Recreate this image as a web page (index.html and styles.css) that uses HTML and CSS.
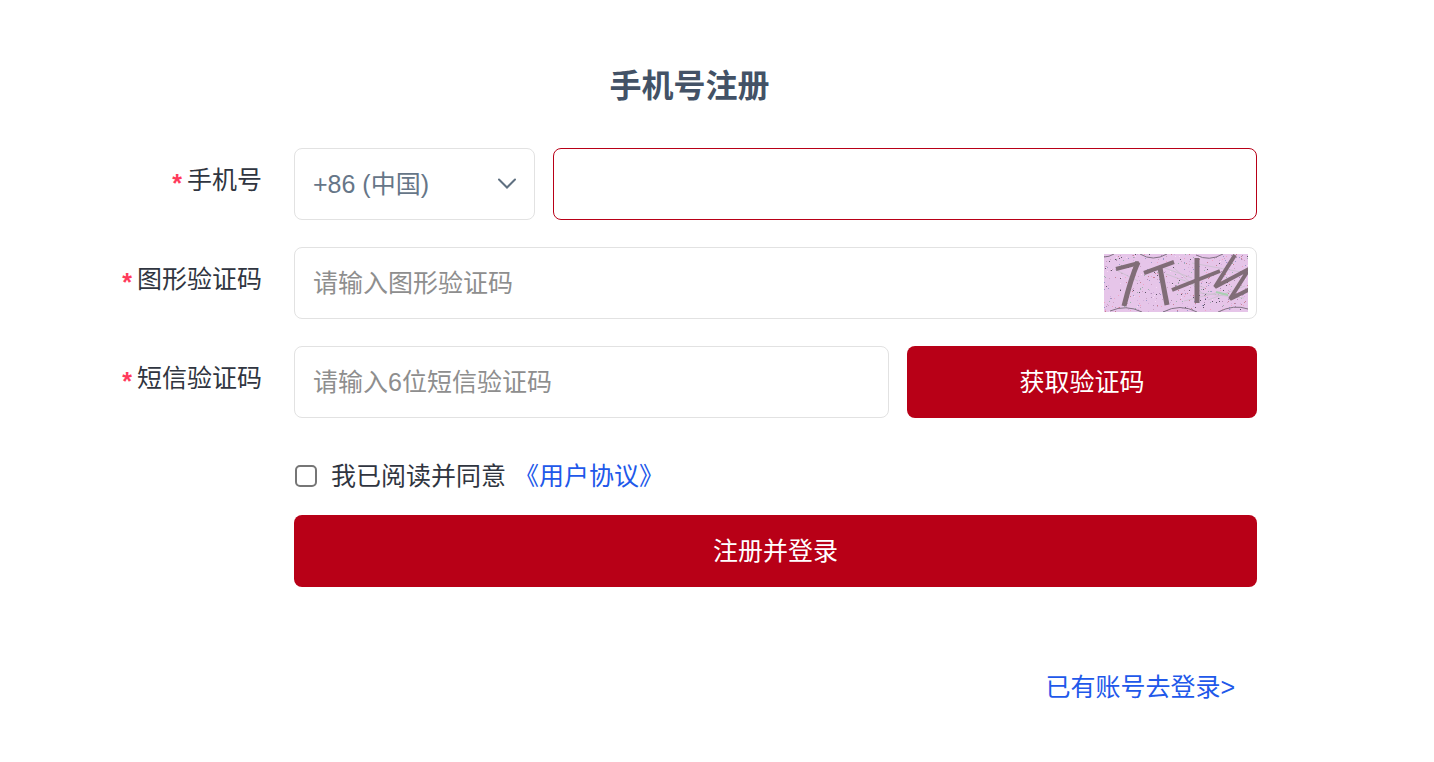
FILE: index.html
```
<!DOCTYPE html>
<html lang="zh-CN">
<head>
    <meta charset="UTF-8">
    <meta name="viewport" content="width=device-width, initial-scale=1.0">
    <title>手机号注册</title>
    <link rel="stylesheet" href="styles.css">
</head>
<body>
    <main class="register">
        <h1>手机号注册</h1>

        <form class="register-form">
            <div class="form-row">
                <label class="required" for="phone">手机号</label>
                <div class="fields">
                    <div class="select-wrap">
                        <select id="areaCode" aria-label="国家区号">
                            <option value="86" selected>+86 (中国)</option>
                        </select>
                        <svg class="arrow" width="20" height="12" viewBox="0 0 20 12" aria-hidden="true">
                            <path d="M2 1.5 L10 9.5 L18 1.5" fill="none" stroke="#5f7081" stroke-width="2" stroke-linecap="round"/>
                        </svg>
                    </div>
                    <input type="tel" id="phone" class="active">
                </div>
            </div>

            <div class="form-row">
                <label class="required" for="captcha">图形验证码</label>
                <div class="fields captcha-field">
                    <input type="text" id="captcha" placeholder="请输入图形验证码">
                    <svg class="captcha-image" width="144" height="58" viewBox="0 0 144 58" role="img" aria-label="图形验证码">
                        <rect width="144" height="58" fill="#e6c5e9"/>
                        <g id="captchaDots"></g>
                        <g fill="none" stroke="#cfc2d3" stroke-width="1">
                            <path d="M58 13 L88 24 M62 20 L101 34 M88 9 L137 18 M80 47 L116 38 M14 17 L34 27"/>
                            <path d="M96 39 L140 44 M104 46 L141 32 M70 14 L98 39"/>
                            <path d="M112 38 L124 41" stroke="#a9cfb1" stroke-width="2"/>
                        </g>
                        <g fill="none" stroke="#817384" stroke-width="1">
                            <path d="M0 3 Q5 3 10 0 M36 0 Q49 8 63 0 M92 1 Q105 8 119 0"/>
                            <path d="M6 57 Q22 50 38 58 M59 58 Q76 49 93 58 M114 58 Q130 50 144 55"/>
                        </g>
                        <g fill="none" stroke="#806d77" stroke-linejoin="bevel">
                            <path d="M12 15 L35 9" stroke-width="4"/>
                            <path d="M34 8 Q27 24 20 52" stroke-width="5"/>
                            <path d="M40 19 L70 8" stroke-width="4"/>
                            <path d="M56 14 L63 51" stroke-width="5"/>
                            <path d="M68 36 L116 17" stroke-width="4"/>
                            <path d="M93 4 L93 49" stroke-width="5"/>
                            <path d="M131 1 L111 33 L145 15 L126 45 L146 35" stroke-width="4"/>
                        </g>
                    </svg>
                </div>
            </div>

            <div class="form-row">
                <label class="required" for="smsCode">短信验证码</label>
                <div class="fields">
                    <input type="text" id="smsCode" placeholder="请输入6位短信验证码">
                    <button type="button" class="btn btn-code">获取验证码</button>
                </div>
            </div>

            <div class="agreement">
                <input type="checkbox" id="agree">
                <label for="agree">我已阅读并同意</label>
                <a href="#">《用户协议》</a>
            </div>

            <button type="submit" class="btn btn-submit">注册并登录</button>
        </form>

        <a class="login-link" href="#">已有账号去登录&gt;</a>
    </main>

    <script>
        // noise dots on the captcha background
        const colors = ['#5f5468', '#c98297', '#9c98c9', '#9eb2b0', '#f7d9f4', '#cba2c3', '#b18fb5', '#efa4c5', '#d5aedd'];
        let seed = 7;
        function rand() {
            seed = (seed * 16807) % 2147483647;
            return seed / 2147483647;
        }
        let dots = '';
        for (let i = 0; i < 520; i++) {
            const x = Math.floor(rand() * 144);
            const y = Math.floor(rand() * 58);
            const color = colors[Math.floor(rand() * colors.length)];
            dots += `<rect x="${x}" y="${y}" width="1" height="1" fill="${color}"/>`;
        }
        document.getElementById('captchaDots').innerHTML = dots;
    </script>
</body>
</html>
```
FILE: styles.css
```
* {
    box-sizing: border-box;
}
body {
    margin: 0;
    background: #fff;
    color: #303540;
    font-family: "Liberation Sans", "Noto Sans CJK SC", sans-serif;
    font-size: 25px;
    line-height: 36px;
}
.register {
    display: flex;
    flex-direction: column;
    padding: 62px 177px 0 122px;
}
h1 {
    margin: 0 0 38px;
    color: #435266;
    font-size: 32px;
    font-weight: bold;
    line-height: 48px;
    text-align: center;
}
.register-form {
    display: grid;
    grid-template-columns: 140px 1fr;
    column-gap: 32px;
}
.form-row {
    display: grid;
    grid-column: 1 / -1;
    grid-template-columns: subgrid;
    margin-bottom: 27px;
}
.required {
    display: flex;
    justify-content: flex-end;
    padding-top: 14px;
    white-space: nowrap;
}
.required::before {
    content: "*";
    margin: 3px 5px 0 0;
    color: #ff3b5c;
    font-weight: bold;
}
.fields {
    display: flex;
    gap: 18px;
    min-width: 0;
}
input,
select,
button {
    font: inherit;
}
.fields input,
.fields select {
    flex: 1;
    width: 100%;
    min-width: 0;
    height: 72px;
    padding: 0 18px;
    border: 1px solid #e2e2e2;
    border-radius: 8px;
    background: #fff;
    color: #303540;
    outline: none;
}
.fields select {
    appearance: none;
    color: #667688;
}
.fields input::placeholder {
    color: #8e8e8e;
    opacity: 1;
}
.fields input:focus,
.fields input.active {
    border-color: #b80017;
}
.select-wrap {
    position: relative;
    flex: 0 0 241px;
}
.arrow {
    position: absolute;
    top: 30px;
    right: 18px;
    pointer-events: none;
}
.captcha-field {
    position: relative;
}
.captcha-image {
    position: absolute;
    top: 7px;
    right: 9px;
    cursor: pointer;
}
.btn {
    height: 72px;
    padding: 0;
    border: none;
    border-radius: 8px;
    background: #b80017;
    color: #fff;
    cursor: pointer;
}
.btn:hover {
    background: #a30014;
}
.btn-code {
    flex: 0 0 350px;
}
.agreement {
    display: flex;
    grid-column: 2;
    align-items: center;
    margin: 13px 0 21px;
}
.agreement input {
    appearance: none;
    width: 22px;
    height: 22px;
    margin: 0 14px 0 1px;
    border: 2px solid #767676;
    border-radius: 5px;
    background: #fff;
}
.agreement input:checked {
    background: #b80017;
}
.agreement a {
    margin-left: 8px;
}
a {
    color: #2158ea;
    text-decoration: none;
}
a:hover {
    text-decoration: underline;
}
.btn-submit {
    grid-column: 2;
}
.login-link {
    align-self: flex-end;
    margin: 82px 22px 0 0;
}
```
